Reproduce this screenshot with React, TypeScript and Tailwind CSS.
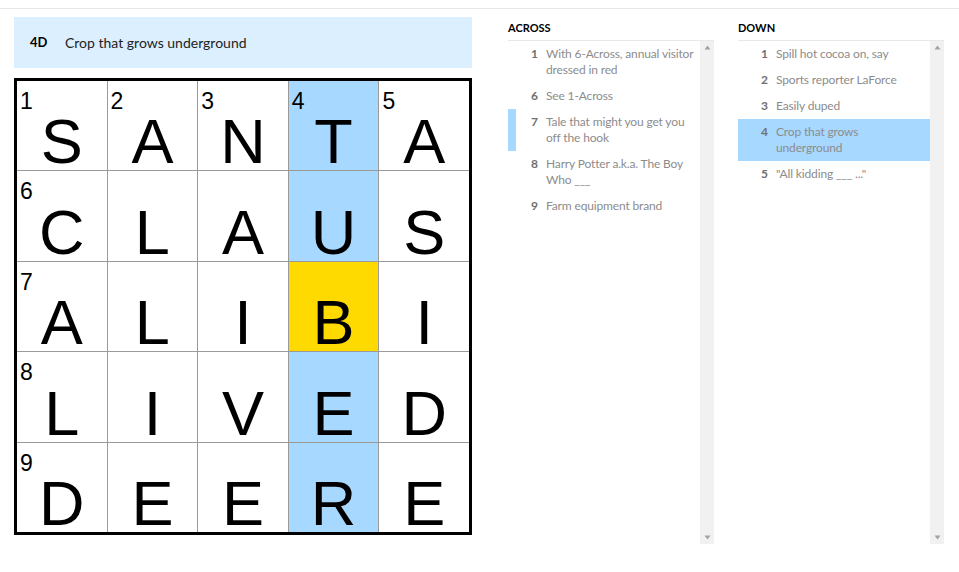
import React from 'react'

const rows = ['SANTA', 'CLAUS', 'ALIBI', 'LIVED', 'DEERE']
const numbers: Record<string, number> = {
  '0-0': 1, '0-1': 2, '0-2': 3, '0-3': 4, '0-4': 5,
  '1-0': 6, '2-0': 7, '3-0': 8, '4-0': 9,
}

type Clue = { n: number; text: string }

const across: Clue[] = [
  { n: 1, text: 'With 6-Across, annual visitor dressed in red' },
  { n: 6, text: 'See 1-Across' },
  { n: 7, text: 'Tale that might you get you off the hook' },
  { n: 8, text: 'Harry Potter a.k.a. The Boy Who ___' },
  { n: 9, text: 'Farm equipment brand' },
]

const down: Clue[] = [
  { n: 1, text: 'Spill hot cocoa on, say' },
  { n: 2, text: 'Sports reporter LaForce' },
  { n: 3, text: 'Easily duped' },
  { n: 4, text: 'Crop that grows underground' },
  { n: 5, text: '"All kidding ___ ..."' },
]

function Cell({ r, c, letter }: { r: number; c: number; letter: string }) {
  const num = numbers[`${r}-${c}`]
  const bg = c === 3 ? (r === 2 ? 'bg-[#ffda00]' : 'bg-[#a7d8ff]') : 'bg-white'
  return (
    <div className={`relative flex items-end justify-center ${bg}`}>
      {num && (
        <span className="absolute left-[3px] top-[9px] text-[23px] leading-none text-black">{num}</span>
      )}
      <span className="text-[63px] leading-[58px] text-black">{letter}</span>
    </div>
  )
}

function ScrollTrack() {
  return (
    <div className="flex w-[14px] shrink-0 flex-col items-center justify-between bg-[#f1f1f1] py-[4px]">
      <svg width="7" height="5" viewBox="0 0 7 5">
        <path d="M3.5 0.5 L6.5 4.5 L0.5 4.5 Z" fill="#a3a3a3" />
      </svg>
      <svg width="7" height="5" viewBox="0 0 7 5">
        <path d="M0.5 0.5 L6.5 0.5 L3.5 4.5 Z" fill="#a3a3a3" />
      </svg>
    </div>
  )
}

function ClueList({
  title,
  clues,
  active,
  related,
}: {
  title: string
  clues: Clue[]
  active?: number
  related?: number
}) {
  return (
    <div className="w-[206px]">
      <div className="h-[32px] border-b border-[#e8e8e8] pt-[12px] text-[11px] font-bold leading-[14px] text-black">
        {title}
      </div>
      <div className="flex h-[503px]">
        <ul className="flex-1">
          {clues.map((clue) => {
            const isActive = clue.n === active
            const isRelated = clue.n === related
            return (
              <li
                key={clue.n}
                className={`flex border-l-8 py-[5px] pr-[4px] text-[12px] leading-[16px] ${
                  isActive
                    ? 'border-[#a7d8ff] bg-[#a7d8ff]'
                    : isRelated
                      ? 'border-[#a7d8ff]'
                      : 'border-transparent'
                }`}
              >
                <span className="w-[22px] shrink-0 text-right font-bold text-[#707070]">{clue.n}</span>
                <span className="ml-[8px] tracking-[-0.15px] text-[#8c8c8c]">{clue.text}</span>
              </li>
            )
          })}
        </ul>
        <ScrollTrack />
      </div>
    </div>
  )
}

export default function App() {
  return (
    <div className="h-[572px] w-[959px] overflow-hidden bg-white" style={{ fontFamily: 'Lato, "Liberation Sans", sans-serif' }}>
      <div className="h-2" />
      <div className="flex border-t border-[#e6e6e6] pl-[14px]">
        <div className="w-[458px] pt-2">
          <div className="flex h-[51px] items-center bg-[#dcefff] pl-4 text-[14px] text-[#222]">
            <span className="w-[35px] text-[13px] font-bold text-black">4D</span>
            <span>Crop that grows underground</span>
          </div>
          <div
            className="mt-[10px] grid h-[457px] grid-cols-5 grid-rows-5 gap-px border-[3px] border-black bg-[#9a9a9a]"
            style={{ fontFamily: '"Liberation Sans", Arial, sans-serif' }}
          >
            {rows.map((word, r) =>
              word.split('').map((letter, c) => <Cell key={`${r}-${c}`} r={r} c={c} letter={letter} />),
            )}
          </div>
        </div>
        <div className="ml-[36px] flex gap-6">
          <ClueList title="ACROSS" clues={across} related={7} />
          <ClueList title="DOWN" clues={down} active={4} />
        </div>
      </div>
    </div>
  )
}
